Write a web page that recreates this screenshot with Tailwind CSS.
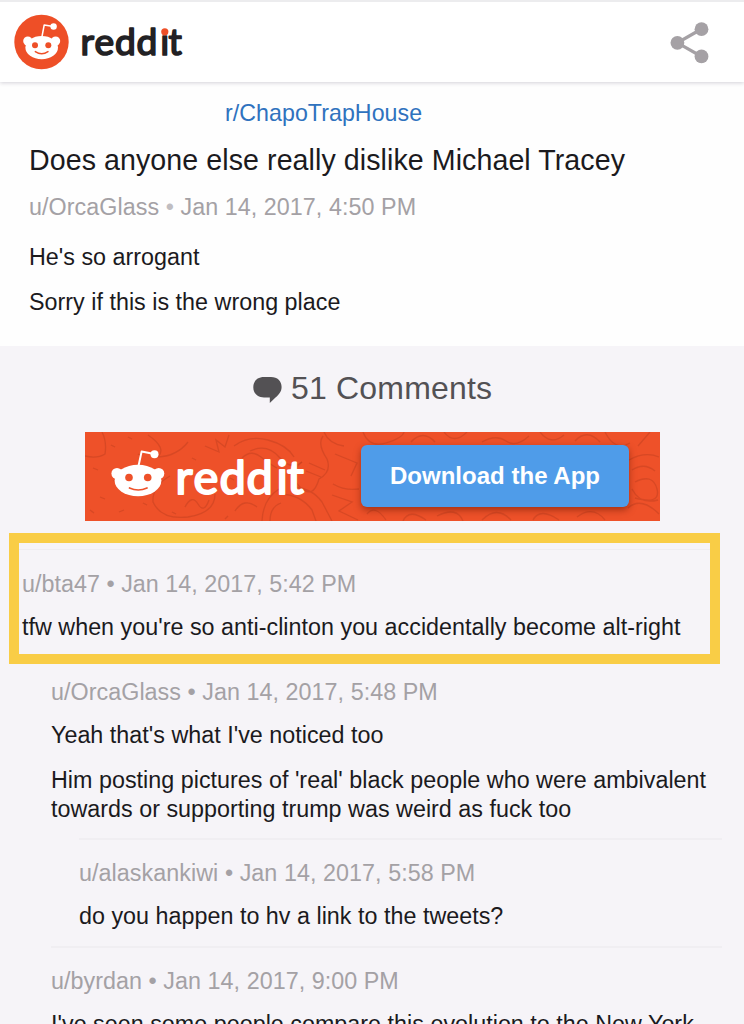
<!DOCTYPE html>
<html lang="en">
<head>
    <meta charset="UTF-8">
    <meta name="viewport" content="width=device-width, initial-scale=1.0">
    <title>Does anyone else really dislike Michael Tracey</title>
    <script src="https://cdn.jsdelivr.net/npm/@tailwindcss/browser@4"></script>
</head>
<body class="h-[1024px] overflow-hidden bg-[#f6f4f8] font-['Liberation_Sans',Arial,sans-serif] text-[23.3px] leading-[29px] tracking-[0.02px] text-[#1b1a1d]">
    <header class="relative flex h-[82px] items-center justify-between border-t-2 border-[#ececee] bg-white pr-[34px] pl-[14px] shadow-[0_1px_4px_rgba(60,50,80,0.22)]">
        <a href="/" aria-label="reddit">
            <svg class="block h-[60px] w-[180px]" viewBox="14 12 180 60">
                <circle cx="41.5" cy="42" r="27.2" fill="#ee4f27"/>
                <g fill="#fff">
                    <circle cx="27.8" cy="41" r="4.6"/>
                    <circle cx="55.6" cy="41" r="4.6"/>
                    <ellipse cx="41.7" cy="47.6" rx="16.3" ry="11.7"/>
                    <circle cx="53.6" cy="26.5" r="3.2"/>
                </g>
                <path d="M42 36.5L44.2 25L52 26.3" fill="none" stroke="#fff" stroke-width="1.5" stroke-linejoin="round"/>
                <circle cx="35" cy="45.2" r="3" fill="#ee4f27"/>
                <circle cx="48.3" cy="45.2" r="3" fill="#ee4f27"/>
                <path d="M35.3 51.6Q41.7 55.8 48 51.6" fill="none" stroke="#ee4f27" stroke-width="1.4" stroke-linecap="round"/>
                <text x="80.6 94.4 115 136.4 160.2 168.6" y="55.2" font-family="Lato, sans-serif" font-weight="400" font-size="37.2" fill="#222124" stroke="#222124" stroke-width="1.7" stroke-linejoin="round">reddit</text>
                <path d="M160.2 24.5H169V34.8H160.2Z" fill="#fff"/>
                <circle cx="164.8" cy="31.8" r="3.6" fill="#ee4f27"/>
            </svg>
        </a>
        <button aria-label="Share">
            <svg class="mt-[2px] block h-[42px] w-[40px]" viewBox="670 23 40 42" fill="#a5a1a5">
                <path d="M701.5 30L677.4 43.8L701.5 57.5" fill="none" stroke="#a5a1a5" stroke-width="3.2"/>
                <circle cx="677.4" cy="43.8" r="6.9"/>
                <circle cx="701.5" cy="30.2" r="6.9"/>
                <circle cx="701.5" cy="57.4" r="6.9"/>
            </svg>
        </button>
    </header>

    <article class="h-[264px] bg-[#fefefe] px-[29px] pt-[17px]">
        <a href="/r/ChapoTrapHouse" class="ml-[196px] block text-[23.2px] tracking-[0.05px] text-[#2f72be]">r/ChapoTrapHouse</a>
        <h1 class="mt-[14px] text-[28.6px] leading-[36px] tracking-[0.07px]">Does anyone else really dislike Michael Tracey</h1>
        <p class="mt-[15px] tracking-[0.06px] text-[#a4a1a5]">u/OrcaGlass <span class="text-[#c0bdc1]">•</span> Jan 14, 2017, 4:50 PM</p>
        <p class="mt-[21px]">He's so arrogant</p>
        <p class="mt-4">Sorry if this is the wrong place</p>
    </article>

    <h2 class="mt-6 flex h-[36px] items-center gap-[9px] pl-[253px] text-[32px] leading-[36px] tracking-[0.18px] text-[#535154]">
        <svg class="mt-1 h-[27px] w-[29px]" viewBox="0 0 29 27" fill="currentColor">
            <path d="M11 0H18C24.5 0 28.6 4 28.6 10C28.6 14.5 26 17.6 22.5 20.5L16.8 26V20.4H11C4.5 20.4 0.3 16.5 0.3 10.2S4.5 0 11 0Z"/>
        </svg>
        51 Comments
    </h2>

    <div class="relative mt-[26px] ml-[85px] flex h-[89px] w-[575px] items-center overflow-hidden bg-[#ee5129]">
        <!-- doodle texture -->
        <svg class="absolute inset-0" width="575" height="89" fill="none" stroke="#c13f20" stroke-opacity=".5" stroke-width="1.3">
            <path d="M0 24Q12 27 20 22Q22 10 17 0M63 3Q82 16 73 25Q92 24 103 10M85 44Q67 54 68 70Q76 88 103 85Q130 81 130 62M100 75Q107 62 113 72T124 68M120 14L134 20L131 8L140 15L144 3M149 14Q164 3 183 8T209 25M165 19Q182 11 194 25T217 30M157 26Q166 17 176 25T192 36"/>
            <path d="M217 30Q202 42 215 55T234 47Q247 40 242 27Q232 12 238 4M224 31L240 38M221 39L236 45M208 55Q227 56 237 70L247 89M196 62Q216 63 227 78L231 89M177 89Q178 67 194 57M185 89Q185 75 196 71M150 79Q159 65 172 75M239 0Q244 12 259 14M250 22L272 31L266 44M248 52Q260 59 274 57M247 63L267 70L254 79L273 88"/>
            <path d="M278 0Q284 16 301 11T319 0M326 10Q338 -3 350 10M359 0Q369 13 382 0M397 10Q411 2 421 9T444 4M455 0Q466 14 479 3M490 9Q502 -4 515 10M520 0Q530 20 545 11M544 28Q560 19 574 25M553 14L565 0M547 38Q559 30 570 39M550 50Q568 41 572 57T550 66M547 57Q555 73 573 68M543 76Q556 64 574 82M282 82Q290 72 301 88M318 89Q324 76 341 88M352 84Q372 74 378 89M397 88Q412 73 426 88M448 88Q455 75 474 88M492 85Q508 73 520 88"/>
            <path d="M8 36l5 2M28 49l5-2M15 65l5 2M34 80l5-2M53 22l4 2M5 78l4 3M58 71l4 2M87 80l4 2M107 26l4 2M145 46l4 2M140 87l3-3M26 13l4 2M43 5l4 2"/>
        </svg>
        <svg class="absolute inset-0" width="575" height="89" viewBox="85 432 575 89">
            <g fill="#fff">
                <circle cx="117" cy="473.5" r="5.6"/>
                <circle cx="158.7" cy="473.5" r="5.6"/>
                <ellipse cx="138" cy="480.5" rx="23.4" ry="15.8"/>
                <circle cx="154.5" cy="454.2" r="4"/>
            </g>
            <path d="M138.5 466L141.6 451.6L153 453.8" fill="none" stroke="#fff" stroke-width="2" stroke-linejoin="round"/>
            <circle cx="129" cy="477.5" r="3.8" fill="#ee5129"/>
            <circle cx="147.7" cy="477.5" r="3.8" fill="#ee5129"/>
            <path d="M129.5 488Q138.3 492 147 488" fill="none" stroke="#ee5129" stroke-width="1.7" stroke-linecap="round"/>
            <text x="175.4 193.6 219.6 246.4 276.6 287" y="494" font-family="Lato, sans-serif" font-weight="400" font-size="47" fill="#fff" stroke="#fff" stroke-width="2" stroke-linejoin="round">reddit</text>
        </svg>
        <button class="relative mb-[2px] ml-[276px] h-[62px] w-[268px] rounded-[6px] bg-[#4f9ce9] text-[24px] font-bold text-white shadow-[0_3px_7px_rgba(90,20,0,0.5)]">Download the App</button>
    </div>

    <main>
        <section class="mt-3 ml-[9px] h-[131px] w-[711px] border-[10.5px] border-[#f9cd46]">
            <div class="mt-[6px] border-t border-[#efedf1] pt-5 pl-[3px]">
                <p class="tracking-[0.03px] text-[#a4a1a5]">u/bta47 <span>•</span> Jan 14, 2017, 5:42 PM</p>
                <p class="mt-[14px] whitespace-nowrap">tfw when you're so anti-clinton you accidentally become alt-right</p>
            </div>
        </section>

        <section class="mt-[14px] mr-[22px] ml-[51px]">
            <p class="tracking-[0.05px] text-[#a4a1a5]">u/OrcaGlass <span>•</span> Jan 14, 2017, 5:48 PM</p>
            <p class="mt-[14px]">Yeah that's what I've noticed too</p>
            <p class="mt-4">Him posting pictures of 'real' black people who were ambivalent<br>towards or supporting trump was weird as fuck too</p>
        </section>

        <section class="mt-[14px] mr-[22px] ml-[79px] border-t-2 border-[#f0eef2] pt-[19px]">
            <p class="tracking-[0.06px] text-[#a4a1a5]">u/alaskankiwi <span>•</span> Jan 14, 2017, 5:58 PM</p>
            <p class="mt-[14px]">do you happen to hv a link to the tweets?</p>
        </section>

        <section class="mt-[15px] mr-[22px] ml-[51px] border-t-2 border-[#f0eef2] pt-[19px]">
            <p class="tracking-[0.05px] text-[#a4a1a5]">u/byrdan <span>•</span> Jan 14, 2017, 9:00 PM</p>
            <p class="mt-[14px] whitespace-nowrap">I've seen some people compare this evolution to the New York</p>
        </section>
    </main>
</body>
</html>
